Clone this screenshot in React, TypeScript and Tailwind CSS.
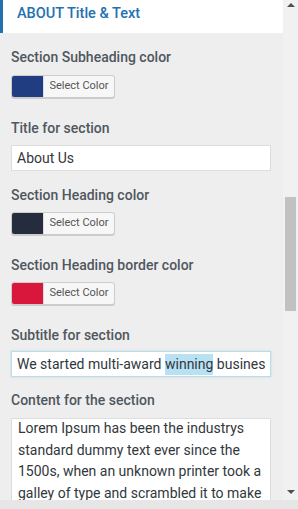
import React from "react";

function ColorButton({ color }: { color: string }) {
  return (
    <div className="flex h-[23px] w-[104px] overflow-hidden rounded-[3px] border border-[#cccccc] bg-[#f7f7f7] shadow-[0_1px_0_#cccccc]">
      <div className="h-full w-[31px]" style={{ backgroundColor: color }} />
      <div className="flex flex-1 items-center justify-center border-l border-[#dddddd] text-[11px] text-[#555555]">
        Select Color
      </div>
    </div>
  );
}

function Label({ children }: { children: React.ReactNode }) {
  return <div className="h-[20px] text-[14px] font-medium leading-[20px] text-[#50575e]">{children}</div>;
}

export default function App() {
  return (
    <div className="w-[298px] h-[509px] overflow-hidden bg-[#e6e6e6]" style={{ fontFamily: "Roboto, 'Noto Sans', sans-serif" }}>
      <div className="flex h-[500px]">
        <div className="h-[500px] w-[283px] overflow-hidden bg-[#eeeeee]">
          <div className="h-[33px] border-l-[3px] border-[#2271b1] bg-white pl-[14px] pt-[1px]">
            <span className="text-[14.5px] font-medium leading-[20px] text-[#2271b1]">ABOUT Title &amp; Text</span>
          </div>
          <div className="px-[11px]">
            <div className="mt-[14px]">
              <Label>Section Subheading color</Label>
              <div className="mt-[8px]">
                <ColorButton color="#213d82" />
              </div>
            </div>
            <div className="mt-[20px]">
              <Label>Title for section</Label>
              <div className="mt-[7px] flex h-[26px] w-[260px] items-center border border-[#dddddd] bg-white pl-[5px] text-[14px] text-[#32373c]">
                About Us
              </div>
            </div>
            <div className="mt-[14px]">
              <Label>Section Heading color</Label>
              <div className="mt-[7px]">
                <ColorButton color="#252c3e" />
              </div>
            </div>
            <div className="mt-[20px]">
              <Label>Section Heading border color</Label>
              <div className="mt-[7px]">
                <ColorButton color="#d9163c" />
              </div>
            </div>
            <div className="mt-[20px]">
              <Label>Subtitle for section</Label>
              <div className="mt-[6px] flex h-[26px] w-[260px] items-center overflow-hidden whitespace-nowrap border border-[#bcdce8] bg-white pl-[5px] text-[14px] text-[#32373c] shadow-[0_0_2px_rgba(30,140,190,0.25)]">
                We started multi-award&nbsp;<span className="bg-[#b8e2f4]">winning</span>&nbsp;busines
              </div>
            </div>
            <div className="mt-[13px]">
              <Label>Content for the section</Label>
              <div className="mt-[8px] h-[120px] w-[260px] overflow-hidden border border-[#dddddd] bg-white px-[6px] text-[14px] leading-[21.7px] text-[#32373c]">
                <div className="-mt-[1px]">
                  <div className="whitespace-nowrap">Lorem Ipsum has been the industrys</div>
                  <div className="whitespace-nowrap">standard dummy text ever since the</div>
                  <div className="whitespace-nowrap">1500s, when an unknown printer took a</div>
                  <div className="whitespace-nowrap">galley of type and scrambled it to make</div>
                </div>
              </div>
            </div>
          </div>
        </div>
        <div className="relative h-[500px] w-[15px] bg-[#f1f1f1]">
          <div className="absolute left-[4px] top-[3px] h-0 w-0 border-x-[4px] border-b-[4px] border-x-transparent border-b-[#505050]" />
          <div className="absolute left-[2px] top-[197px] h-[114px] w-[11px] bg-[#c1c1c1]" />
          <div className="absolute left-[4px] top-[490px] h-0 w-0 border-x-[4px] border-t-[4px] border-x-transparent border-t-[#505050]" />
        </div>
      </div>
    </div>
  );
}
